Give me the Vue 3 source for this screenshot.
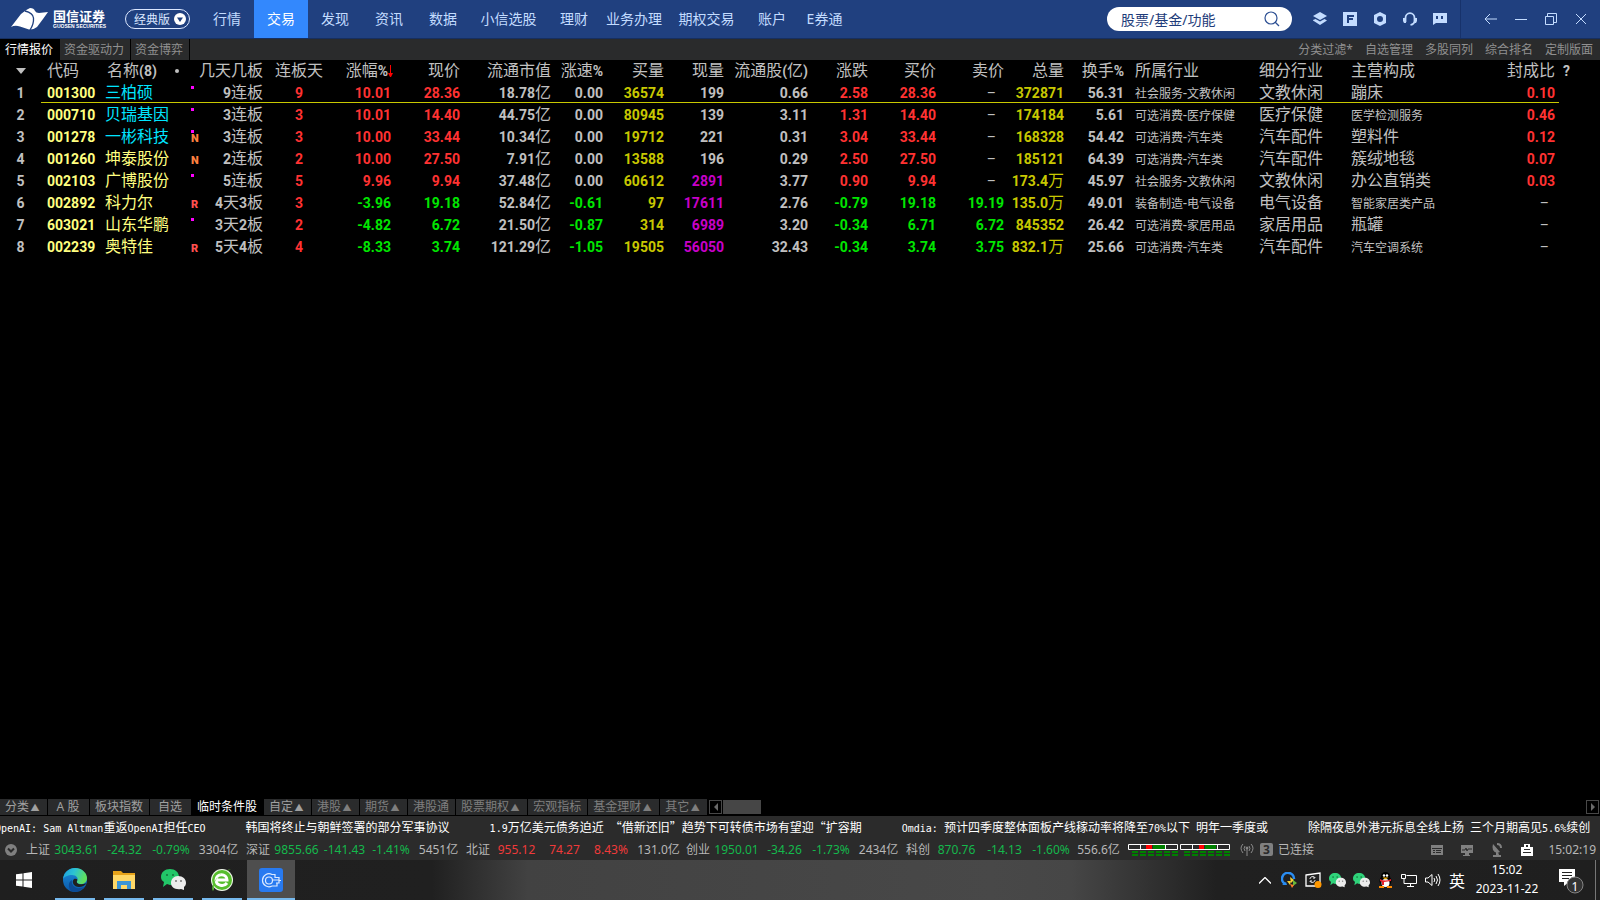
<script setup>
import { h, ref } from 'vue'

// Splits a string into Chinese and Latin runs so that each gets its own face and weight.
const Mix = (props) =>
  props.t
    .split(/([“”\u3000-\u9fff\uff00-\uffef]+)/)
    .filter(Boolean)
    .map((s) => h('span', { class: /[“”\u3000-\u9fff]/.test(s) ? 'cjk' : 'lat' }, s))
Mix.props = ['t']

const keyword = ref('')
const nav = ['行情', '交易', '发现', '资讯', '数据', '小信选股', '理财', '业务办理', '期权交易', '账户', 'E券通']
const views = ['行情报价', '资金驱动力', '资金博弈']
const tools = ['分类过滤*', '自选管理', '多股同列', '综合排名', '定制版面']
const widths = [41, 60, 84, 14, 66, 68, 60, 69, 91, 52, 61, 60, 84, 60, 68, 68, 60, 60, 130, 92, 122, 89, 41]

const rows = [
  ['001300', '三柏硕', '.', '9连板', '9', '10.01', '28.36', '18.78亿', '0.00', '36574', '199', '0.66', '2.58', '28.36', '–', '372871', '56.31', '社会服务-文教休闲', '文教休闲', '蹦床', '0.10'],
  ['000710', '贝瑞基因', '.', '3连板', '3', '10.01', '14.40', '44.75亿', '0.00', '80945', '139', '3.11', '1.31', '14.40', '–', '174184', '5.61', '可选消费-医疗保健', '医疗保健', '医学检测服务', '0.46'],
  ['001278', '一彬科技', '.N', '3连板', '3', '10.00', '33.44', '10.34亿', '0.00', '19712', '221', '0.31', '3.04', '33.44', '–', '168328', '54.42', '可选消费-汽车类', '汽车配件', '塑料件', '0.12'],
  ['001260', '坤泰股份', 'N', '2连板', '2', '10.00', '27.50', '7.91亿', '0.00', '13588', '196', '0.29', '2.50', '27.50', '–', '185121', '64.39', '可选消费-汽车类', '汽车配件', '簇绒地毯', '0.07'],
  ['002103', '广博股份', '.', '5连板', '5', '9.96', '9.94', '37.48亿', '0.00', '60612', '2891', '3.77', '0.90', '9.94', '–', '173.4万', '45.97', '社会服务-文教休闲', '文教休闲', '办公直销类', '0.03'],
  ['002892', '科力尔', 'R', '4天3板', '3', '-3.96', '19.18', '52.84亿', '-0.61', '97', '17611', '2.76', '-0.79', '19.18', '19.19', '135.0万', '49.01', '装备制造-电气设备', '电气设备', '智能家居类产品', '–'],
  ['603021', '山东华鹏', '.', '3天2板', '2', '-4.82', '6.72', '21.50亿', '-0.87', '314', '6989', '3.20', '-0.34', '6.71', '6.72', '845352', '26.42', '可选消费-家居用品', '家居用品', '瓶罐', '–'],
  ['002239', '奥特佳', 'R', '5天4板', '4', '-8.33', '3.74', '121.29亿', '-1.05', '19505', '56050', '32.43', '-0.34', '3.74', '3.75', '832.1万', '25.66', '可选消费-汽车类', '汽车配件', '汽车空调系统', '–'],
]

function cellClass(row, j) {
  const v = row[j]
  if (v === '–') return 'none'
  const trend = row[5][0] === '-' ? 'down' : 'up'
  if (j === 0) return 'left code yel'
  if (j === 1) return ['left name', ['三柏硕', '贝瑞基因', '一彬科技'].includes(v) ? 'cyan' : 'yel']
  if (j === 4) return 'mid up'
  if ([5, 6, 12, 13, 14].includes(j)) return trend
  if (j === 8) return v[0] === '-' ? 'down' : ''
  if (j === 9 || j === 15) return 'vol'
  if (j === 10) return Number(v) > 1000 ? 'big' : ''
  if (j === 17) return 'left trade small'
  if (j === 18) return 'left sub'
  if (j === 19) return ['left sub', v.length > 5 ? 'small' : '']
  if (j === 20) return 'seal up'
  return ''
}

const sheets = ['分类▲', 'A 股', '板块指数', '自选', '临时条件股', '自定▲', '港股▲', '期货▲', '港股通', '股票期权▲', '宏观指标', '基金理财▲', '其它▲']
const news = [
  'OpenAI: Sam Altman重返OpenAI担任CEO',
  '韩国将终止与朝鲜签署的部分军事协议',
  '1.9万亿美元债务迫近 “借新还旧”趋势下可转债市场有望迎“扩容期',
  'Omdia: 预计四季度整体面板产线稼动率将降至70%以下 明年一季度或',
  '除隔夜息外港元拆息全线上扬 三个月期高见5.6%续创',
]
const indices = [
  ['上证', '3043.61', '-24.32', '-0.79%', '3304亿'],
  ['深证', '9855.66', '-141.43', '-1.41%', '5451亿'],
  ['北证', '955.12', '74.27', '8.43%', '131.0亿'],
  ['创业', '1950.01', '-34.26', '-1.73%', '2434亿'],
  ['科创', '870.76', '-14.13', '-1.60%', '556.6亿'],
]
</script>

<template>
  <div class="app">
    <header class="top">
      <div class="brand">
        <svg width="38" height="24" viewBox="0 0 38 24" aria-hidden="true">
          <path fill="#fff" d="M0 20 L10 7 L12 5.500 Q16 2 19 1 Q23 1 24 4 Q25 6 28 6 L37 5 L32 12 L26 20 Q22 23 18 22.500 L9 19.500 Q4 18 0 20Z" />
          <path d="M14 4 Q22 6 22.500 11 Q23 17 19 23" fill="none" stroke="#20407f" stroke-width="1.300" />
        </svg>
        <div class="brand-text"><b>国信证券</b><small>GUOSEN SECURITIES</small></div>
      </div>
      <button class="edition">经典版
        <svg width="12" height="12" viewBox="0 0 12 12" aria-hidden="true"><circle cx="6" cy="6" r="6" fill="#fff" /><path d="M3 4.500h6L6 9z" fill="#20407f" /></svg>
      </button>
      <nav class="nav">
        <a v-for="(n, i) in nav" :key="n" href="#" :class="{ on: i === 1 }">{{ n }}</a>
      </nav>
      <label class="search">
        <input v-model="keyword" type="text" placeholder="股票/基金/功能" aria-label="搜索" />
        <svg width="16" height="16" viewBox="0 0 16 16" fill="none" stroke="#2c4f93" stroke-width="1.200" aria-hidden="true"><circle cx="7" cy="7" r="6" /><path d="M11 11l4 4" /></svg>
      </label>
      <div class="quick">
        <button aria-label="图层"><svg viewBox="0 0 14 14"><path d="M7 0l7 4-7 4-7-4z M0 8l2.500-1L7 9.600 11.500 7 14 8.500 7 13 0 8.500z" /></svg></button>
        <button aria-label="F"><svg viewBox="0 0 14 14"><path fill-rule="evenodd" d="M0 0h14v14H0z M4 3v8h2V8h4V6H6V5h5V3z" /></svg></button>
        <button aria-label="设置"><svg viewBox="0 0 14 14"><path fill-rule="evenodd" d="M7 0l6 3v8l-6 3-6-3V3z M7 4a3 3 0 1 0 0 6 3 3 0 1 0 0-6z" /></svg></button>
        <button aria-label="客服"><svg viewBox="0 0 14 14"><path d="M2.500 10V6a4.500 4.800 0 0 1 9 0v3q0 3-4 4" fill="none" stroke="#c3dcff" stroke-width="1.800" /><path d="M0 6h3v5H1L0 9z M14 6h-3v5h2l1-2z" /></svg></button>
        <button aria-label="消息"><svg viewBox="0 0 14 14"><path fill-rule="evenodd" d="M0 1h14v10H3l-3 2z M3 4v3h2V4z M8 4v3h2V4z" /></svg></button>
      </div>
      <div class="win">
        <button aria-label="返回"><svg viewBox="0 0 14 14"><path d="M13 7H1 M6 2L1 7l5 5" /></svg></button>
        <button aria-label="最小化"><svg viewBox="0 0 14 14"><path d="M1 7.500h12" /></svg></button>
        <button aria-label="还原"><svg viewBox="0 0 14 14"><path d="M1.500 4.500h8v8h-8z M3.500 4V1.500h9v9H10" /></svg></button>
        <button aria-label="关闭"><svg viewBox="0 0 14 14"><path d="M2 2l10 10M12 2L2 12" /></svg></button>
      </div>
    </header>

    <div class="views">
      <button v-for="(v, i) in views" :key="v" class="view" :class="{ on: i === 0 }">{{ v }}</button>
      <div class="tools"><a v-for="t in tools" :key="t" href="#">{{ t }}</a></div>
    </div>

    <main class="quotes">
      <table>
        <colgroup><col v-for="(w, i) in widths" :key="i" :width="w" /></colgroup>
        <thead>
          <tr>
            <th class="mid"><svg width="10" height="6" viewBox="0 0 10 6" aria-label="排序"><path d="M0 0h10L5 6z" fill="#c0c0c0" /></svg></th>
            <th class="left code"><Mix t="代码" /></th>
            <th class="left title"><Mix t="名称(8)" /><i></i></th>
            <th></th>
            <th><Mix t="几天几板" /></th>
            <th class="mid"><Mix t="连板天" /></th>
            <th class="sorted"><Mix t="涨幅%" /><svg width="5" height="13" viewBox="0 0 5 13" aria-hidden="true"><path d="M2 0h1v8h2L3 12H2L0 8h2z" fill="#f00" /></svg></th>
            <th v-for="c in ['现价', '流通市值', '涨速%', '买量', '现量', '流通股(亿)', '涨跌', '买价', '卖价', '总量', '换手%']" :key="c"><Mix :t="c" /></th>
            <th class="left trade"><Mix t="所属行业" /></th>
            <th class="left sub"><Mix t="细分行业" /></th>
            <th class="left sub"><Mix t="主营构成" /></th>
            <th class="seal"><Mix t="封成比" /></th>
            <th class="left help">?</th>
          </tr>
        </thead>
        <tbody>
          <tr v-for="(r, i) in rows" :key="r[0]" :class="{ cur: i === 0 }">
            <td class="mid">{{ i + 1 }}</td>
            <template v-for="(v, j) in r" :key="j">
              <td v-if="j === 2" class="mark"><i v-if="v[0] === '.'"></i><b :class="v.slice(-1)">{{ v.replace('.', '') }}</b></td>
              <td v-else :class="cellClass(r, j)"><Mix :t="v" /></td>
            </template>
            <td></td>
          </tr>
        </tbody>
      </table>
    </main>

    <div class="sheets">
      <button v-for="(s, i) in sheets" :key="s" class="sheet" :class="{ on: i === 4, lit: i < 6 }">{{ s.replace('▲', '') }}<span v-if="s.endsWith('▲')" class="tri">▲</span></button>
      <button class="step first" aria-label="向左"><svg viewBox="0 0 4 8"><path d="M4 0v8L0 4z" /></svg></button>
      <span class="thumb"></span>
      <button class="step last" aria-label="向右"><svg viewBox="0 0 4 8"><path d="M0 0v8l4-4z" /></svg></button>
    </div>

    <div class="ticker"><a v-for="n in news" :key="n" href="#"><Mix :t="n" /></a></div>

    <div class="status">
      <svg class="expand" width="12" height="12" viewBox="0 0 12 12" aria-hidden="true"><circle cx="6" cy="6" r="6" fill="#808080" /><path d="M3 4.500l3 3 3-3" fill="none" stroke="#2b2b2b" stroke-width="2" /></svg>
      <div v-for="x in indices" :key="x[0]" class="index" :class="x[2][0] === '-' ? 'fall' : 'rise'">
        <span>{{ x[0] }}</span><em>{{ x[1] }}</em><em>{{ x[2] }}</em><em>{{ x[3] }}</em><span>{{ x[4] }}</span>
      </div>
      <svg class="meter" width="102" height="14" viewBox="0 0 102 14" aria-hidden="true">
        <g v-for="k in 2" :key="k">
          <path :d="k === 1 ? 'M.5 1.500h49v5H.5z M12.500 1.500v5 M37.500 1.500v5' : 'M52.500 1.500h49v5h-49z M64.500 1.500v5 M89.500 1.500v5'" fill="none" stroke="#fff" />
          <rect :x="k === 1 ? 18 : 71" y="2" :width="k === 1 ? 6 : 5" height="4" fill="#f00" />
          <rect :x="k === 1 ? 25 : 77" y="2" :width="k === 1 ? 12 : 11" height="4" fill="#008000" />
          <path :d="`M${k * 52 - 48} 9h46 M${k * 52 - 48} 12h46`" stroke="#008000" stroke-width="2" stroke-dasharray="6 2" />
        </g>
      </svg>
      <svg class="antenna" width="14" height="14" viewBox="0 0 14 14" fill="none" stroke="#8c8c8c" aria-hidden="true"><path d="M3 1Q-1 5 3 10M11 1q4 4 0 9M5 3Q3 5.500 5 8M9 3q2 2.500 0 5M7 5v8" /><circle cx="7" cy="5" r="1" fill="#8c8c8c" /></svg>
      <span class="level">3</span>
      <span>已连接</span>
      <div class="state-icons">
        <svg viewBox="0 0 14 14" fill="#808080"><path fill-rule="evenodd" d="M1 2h12v10H1z M2 5v1h10V5z M3 7v1h2V7z M6 7v1h5V7z M3 9v1h2V9z M6 9v1h5V9z" /></svg>
        <svg viewBox="0 0 14 14" fill="#808080"><path d="M1 2h12v8H1z M5 10h4v2H5z M3 12h7v1H3z" /><path d="M2 7h3l1-2 1 3 1-2h4" fill="none" stroke="#2b2b2b" /></svg>
        <svg viewBox="0 0 14 14" fill="#808080"><path d="M3 1l7 8q-5 2-7-2-1-3 0-6z M7 0q5 0 5 5h-2q0-3-3-3z M6 9h2l1 3h2v2H3v-2h3z" /></svg>
        <svg viewBox="0 0 14 14"><path fill="#fff" fill-rule="evenodd" d="M4 1h6v3h3v9H1V4h3z M6 2v2h2V2z M4 6v1h6V6z M3 9v1h8V9z" /></svg>
      </div>
      <time>15:02:19</time>
    </div>

    <footer class="taskbar">
      <button class="start" aria-label="开始"><svg width="16" height="16" viewBox="0 0 16 16" fill="#fff"><path d="M0 2.300L6.500 1.400v6.100H0z M7.500 1.200L16 0v7.500H7.500z M0 8.500h6.500v6.100L0 13.700z M7.500 8.500H16V16l-8.500-1.200z" /></svg></button>
      <button class="task" aria-label="Edge">
        <svg width="24" height="24" viewBox="0 0 24 24">
          <defs>
            <linearGradient id="eg" x1="0" y1="0" x2="1" y2="0.300"><stop offset="0" stop-color="#1b9de2" /><stop offset="0.500" stop-color="#2cc3d2" /><stop offset="1" stop-color="#5fe05e" /></linearGradient>
            <linearGradient id="eb" x1="0" y1="0" x2="0" y2="1"><stop offset="0" stop-color="#1b8fdc" /><stop offset="1" stop-color="#0b58a8" /></linearGradient>
          </defs>
          <circle cx="12" cy="12" r="12" fill="url(#eb)" />
          <path d="M0 11C1 4 6 0 12 0c7 0 12 5 12 10 0 4-3 6-6 6-3 0-5-1-4-3 2-3-1-6-5-6-4 0-8 2-9 4z" fill="url(#eg)" />
          <path d="M9 12c-1 4 2 9 8 8 2 0 4-1 5-2-3 5-9 7-14 5-3-4-3-9 1-11z" fill="#0c4a94" />
          <path d="M11 11c-3 3 0 8 5 8 3 0 5-1 7-3 0-1-1 0-3 0-4 1-7-1-6-3 1-1 0-3-3-2z" fill="#1f1f1f" />
        </svg>
      </button>
      <button class="task" aria-label="文件资源管理器">
        <svg width="22" height="20" viewBox="0 0 22 20"><path d="M0 1h8l2 2h12v15H0z" fill="#e7a31a" /><path d="M0 5h22v14H0z" fill="#ffd867" /><path d="M4 19v-8h14v8h-4v-4H8v4z" fill="#3c95d6" /></svg>
      </button>
      <button class="task" aria-label="微信">
        <svg width="25" height="22" viewBox="0 0 25 22"><path d="M9 0c5 0 9 3 9 8s-4 8-9 8l-3-1-4 3 1-5C1 12 0 10 0 8c0-5 4-8 9-8z" fill="#22c768" /><circle cx="6" cy="6" r="1" fill="#14723c" /><circle cx="12" cy="6" r="1" fill="#14723c" /><path d="M17 7c5 0 8 3 8 7 0 2-1 3-2 4v3l-3-1c-6 1-10-2-10-6s3-7 7-7z" fill="#ececec" /><circle cx="15" cy="12" r="1" fill="#777" /><circle cx="20" cy="12" r="1" fill="#777" /></svg>
      </button>
      <button class="task" aria-label="浏览器">
        <svg width="24" height="24" viewBox="0 0 24 24"><circle cx="12" cy="12" r="11" fill="#f0f8ea" /><circle cx="12" cy="12" r="10" fill="#56bd2c" /><path d="M6 12h11c0-7-11-7-11 0 0 6 8 7 11 3" fill="none" stroke="#fff" stroke-width="3" /><path d="M3 23c-3-5 4-18 18-22-2 1-4 2-7 3C7 8 3 15 4 21z" fill="#5ec436" /></svg>
      </button>
      <button class="task on" aria-label="国信证券">
        <svg width="24" height="24" viewBox="0 0 24 24" fill="none" stroke="#dceaff" stroke-width="1.200"><rect width="24" height="24" rx="3" fill="#287af0" stroke="none" /><path d="M13 6.500A6.500 6.500 0 1 0 13 18M10 9a3.500 3.500 0 1 0 0 7 3.500 3.500 0 1 0 0-7M12 6.500h4v3h4v3h2M14 12h6v3h-3M13 18h5v-3" /></svg>
      </button>

      <div class="tray">
        <button aria-label="显示隐藏的图标"><svg width="12" height="7" viewBox="0 0 12 7"><path d="M0 6.500l6-6 6 6" fill="none" stroke="#fff" stroke-width="1.300" /></svg></button>
        <button aria-label="360"><svg width="16" height="16" viewBox="0 0 16 16"><path d="M4 12A6 6 0 1 1 13 7" fill="none" stroke="#2a8df2" stroke-width="2.500" /><path d="M1 13h5l-1-3z" fill="#2a8df2" /><path d="M9 5l4 3-3 3z" fill="#f7d034" /><path d="M6 9h4l-1 4z" fill="#f7d034" /><path d="M12 8l4 3-4 3z" fill="#69b83a" /><path d="M9 12l4 1-2 3z" fill="#ff7d29" /></svg></button>
        <button aria-label="更新"><svg width="17" height="16" viewBox="0 0 17 16"><path d="M1 3l14-2v13H1z" fill="none" stroke="#fff" stroke-width="1.300" /><path d="M5 7c0-3 5-3 5-1h-2M10 8c0 3-5 3-5 1h2" fill="none" stroke="#fff" /><circle cx="13" cy="12.500" r="3.500" fill="#ff9800" /></svg></button>
        <button v-for="k in 2" :key="k" aria-label="微信"><svg width="17" height="15" viewBox="0 0 25 22"><path d="M9 0c5 0 9 3 9 8s-4 8-9 8l-3-1-4 3 1-5C1 12 0 10 0 8c0-5 4-8 9-8z" fill="#2fd37a" /><circle cx="6" cy="6" r="1.200" fill="#14723c" /><circle cx="12" cy="6" r="1.200" fill="#14723c" /><path d="M17 7c5 0 8 3 8 7 0 2-1 3-2 4v3l-3-1c-6 1-10-2-10-6s3-7 7-7z" fill="#ececec" /><circle cx="15" cy="12" r="1" fill="#777" /><circle cx="20" cy="12" r="1" fill="#777" /></svg></button>
        <button aria-label="QQ"><svg width="15" height="16" viewBox="0 0 15 16"><ellipse cx="7.500" cy="9" rx="6" ry="6" fill="#000" /><circle cx="7.500" cy="4.500" r="4.500" fill="#000" /><ellipse cx="7.500" cy="11" rx="4" ry="4" fill="#fff" /><circle cx="6" cy="3.500" r="1.200" fill="#fff" /><circle cx="9" cy="3.500" r="1.200" fill="#fff" /><path d="M4.500 5.500h6l-3 2z" fill="#ffb400" /><path d="M2 7q5 3 11 0v2l-7 1v3H4v-3L2 9z" fill="#e8202a" /><path d="M1 14h5v2H1zM9 14h5v2H9z" fill="#ff8a00" /></svg></button>
        <button aria-label="网络"><svg width="16" height="14" viewBox="0 0 16 14" fill="none" stroke="#fff"><path d="M5.500 2.500h10v8H3V6M.5 1.500h4v4h-4zM9.500 10.500v3M6 13.500h7" /></svg></button>
        <button aria-label="音量"><svg width="16" height="14" viewBox="0 0 16 14" fill="none" stroke="#fff"><path d="M.5 5h2.500l4-3.500v11L3 9H.5zM9 5q1.500 2 0 4M11 3q3 4 0 8M13 1q4 6 0 12" /></svg></button>
        <button class="ime">英</button>
      </div>
      <div class="clock"><time>15:02</time><time>2023-11-22</time></div>
      <button class="notice" aria-label="通知">
        <svg width="28" height="26" viewBox="0 0 28 26"><path d="M0 0h16v13h-6l-5 4v-4H0z" fill="#fff" /><path d="M3 3.500h10M3 6.500h10M3 9.500h7" stroke="#222" /><circle cx="16" cy="16" r="8" fill="#333" stroke="#858585" /></svg>
        <span>1</span>
      </button>
    </footer>
  </div>
</template>

<style>
body { background: #000; }
</style>

<style scoped>
.app {
  display: flex;
  flex-direction: column;
  min-height: 100vh;
  overflow: hidden;
  background: #000;
  color: #c0c0c0;
  font: 12px "Noto Sans", "Noto Sans CJK SC", sans-serif;
}
button { padding: 0; border: 0; background: none; color: inherit; font: inherit; }
a { color: inherit; text-decoration: none; }
svg { display: block; flex: none; }
em { font-style: normal; }

.top {
  display: flex;
  align-items: center;
  height: 38px;
  background: #20407f;
  border-bottom: 1px solid #172f5f;
  color: #c3dcff;
}
.brand { display: flex; align-items: center; gap: 4px; width: 114px; padding-left: 11px; color: #fff; }
.brand-text { display: flex; flex-direction: column; white-space: nowrap; }
.brand-text b { font-size: 13px; line-height: 14px; }
.brand-text small { font: bold 5px/7px "Liberation Sans", sans-serif; }
.edition {
  display: flex;
  align-items: center;
  justify-content: space-between;
  width: 65px;
  height: 20px;
  padding: 0 3px 0 8px;
  border: 1px solid #dce8ff;
  border-radius: 10px;
  color: #dce8ff;
}
.nav {
  display: grid;
  grid-template-columns: repeat(5, 54px) 77px 54px 66px 79px 52px 53px;
  margin-left: 10px;
  font-size: 14px;
  line-height: 38px;
  text-align: center;
  white-space: nowrap;
}
.nav .on { background: #3388fd; color: #fff; }
.search {
  display: flex;
  align-items: center;
  width: 185px;
  height: 24px;
  margin-left: auto;
  padding: 0 12px 0 14px;
  box-sizing: border-box;
  border-radius: 12px;
  background: #fff;
}
.search input {
  flex: 1;
  min-width: 0;
  padding: 0;
  border: 0;
  outline: 0;
  background: none;
  color: #1e3c7a;
  font: 14px "Noto Sans", "Noto Sans CJK SC", sans-serif;
}
.search input::placeholder { color: #1e3c7a; opacity: 1; }
.quick { display: flex; width: 152px; margin: 0 3px 0 13px; }
.quick button, .win button { display: grid; place-items: center; width: 30px; height: 38px; }
.quick svg { width: 14px; height: 14px; fill: #c3dcff; }
.win { display: flex; height: 38px; padding: 0 4px 0 15px; border-left: 1px solid #17326b; }
.win svg { width: 14px; height: 14px; fill: none; stroke: #c3dcff; }

.views { display: flex; height: 21px; background: #2a2b2c; color: #909090; line-height: 21px; }
.view { padding: 0 6px 0 4px; border-right: 1px solid #000; }
.view.on { padding-left: 5px; background: #000; color: #fff; }
.tools { display: flex; gap: 12px; margin-left: auto; padding-right: 7px; }

.quotes { flex: 1; }
table { width: 100%; border-collapse: collapse; table-layout: fixed; font: bold 14px Roboto, sans-serif; }
th, td { height: 21px; padding: 1px 2px 0 0; line-height: 20px; text-align: right; white-space: nowrap; }
th { height: 20px; line-height: 19px; }
table :deep(.cjk) { font: 16px/16px "Noto Sans CJK SC", sans-serif; }
table .small :deep(.cjk) { font-size: 12px; }
table .small { font-weight: 400; }
.mid { padding-right: 0; text-align: center; }
.mid svg { margin: 0 auto; }
.left { text-align: left; }
.code { padding-left: 6px; }
.name { padding-left: 4px; }
.title { padding-left: 6px; }
.title i { display: inline-block; width: 4px; height: 4px; margin-left: 18px; border-radius: 50%; background: #c0c0c0; vertical-align: 3px; }
.trade { padding-left: 9px; }
.sub { padding-left: 3px; }
.seal { padding-right: 4px; }
.help { padding-left: 4px; }
.sorted { padding-right: 0; }
.sorted svg { display: inline-block; vertical-align: -2px; }
.none { padding-right: 10px; font-weight: 400; }
.cur td { box-shadow: inset 0 -1px #c8c800; }
.cur td:first-child, .cur td:last-child { box-shadow: none; }
.up { color: #ff3232; }
.down { color: #00e600; }
.yel { color: #ffff80; }
.cyan { color: #00e5ff; }
.vol { color: #c8c800; }
.big { color: #c800c8; }
.mark { position: relative; padding: 0 0 0 6px; text-align: left; }
.mark i { position: absolute; top: 5px; left: 6px; width: 3px; height: 3px; background: #f0f; }
.mark b { display: block; height: 16px; padding-top: 6px; font-size: 11px; line-height: 16px; }
.N { color: #ff8040; }
.R { color: #ff5050; }

.sheets { display: flex; gap: 1px; height: 16px; padding-bottom: 1px; color: #7e7e7e; line-height: 16px; }
.sheet { min-width: 41px; padding: 0 6px 0 5px; background: #2a2b2c; white-space: nowrap; }
.sheet.lit { color: #a0a0a0; }
.sheet.on { background: #000; color: #fff; }
.tri { display: inline-block; width: 12px; font-size: 9px; line-height: 12px; text-align: center; }
.step { display: grid; place-items: center; width: 13px; height: 14px; margin-top: 1px; box-sizing: border-box; border: 1px solid #484848; }
.step svg { width: 4px; height: 8px; fill: #6a6a6a; }
.step.first { margin-left: 1px; }
.step.last { margin-left: auto; margin-right: 1px; }
.thumb { width: 38px; height: 14px; margin-top: 1px; background: #464646; }

.ticker {
  display: flex;
  gap: 40px;
  height: 23px;
  overflow: hidden;
  background: #2b2b2b;
  color: #fff;
  line-height: 23px;
  white-space: pre;
}
.ticker a:first-child { margin-left: -5px; }
.ticker :deep(.lat) { font: 10px/12px "DejaVu Sans Mono", monospace; }
.ticker :deep(.cjk) { font: 12px/12px "Noto Sans CJK SC", sans-serif; }

.status { display: flex; align-items: center; height: 21px; padding: 0 4px 0 5px; background: #2b2b2b; color: #b8b8b8; line-height: 21px; white-space: nowrap; }
.expand { margin-right: 9px; }
.index { display: grid; grid-template-columns: 24px 53px 43px 50px 45px; width: 220px; text-align: center; }
.fall em { color: #14b84c; }
.rise em { color: #f03a3a; }
.meter { margin-left: 2px; }
.antenna { margin: 0 6px 0 10px; }
.level { width: 13px; height: 13px; margin-right: 5px; border-radius: 2px; background: #808080; color: #2b2b2b; font-weight: 700; line-height: 13px; text-align: center; }
.state-icons { display: flex; gap: 16px; margin: 0 14px 0 auto; }
.state-icons svg { width: 14px; height: 14px; }

.taskbar {
  display: flex;
  height: 40px;
  background: linear-gradient(90deg, #1f1f1f 0, #202020 27%, #424242 33%, #484848 62%, #464646 67%, #202020 76%, #1f1f1f 100%);
  color: #fff;
}
.start, .task { display: grid; place-items: center; width: 48px; }
.start { margin-right: 3px; }
.task { position: relative; margin-right: 1px; }
.task::after { content: ""; position: absolute; right: 4px; bottom: 0; left: 4px; height: 2px; background: #76b9ed; }
.task.on { background: #4e4e4e; }
.task.on::after { right: 0; left: 0; }
.tray { display: flex; margin-left: auto; }
.tray button { display: grid; place-items: center; width: 24px; }
.tray .ime { font-size: 16px; }
.clock { display: flex; flex-direction: column; width: 72px; margin-left: 2px; text-align: center; line-height: 19px; }
.notice { position: relative; width: 37px; margin: 0 4px 0 16px; border-right: 1px solid #777; }
.notice svg { margin-top: 3px; }
.notice span { position: absolute; top: 18px; left: 8px; width: 16px; font-size: 12px; line-height: 18px; text-align: center; }
</style>
